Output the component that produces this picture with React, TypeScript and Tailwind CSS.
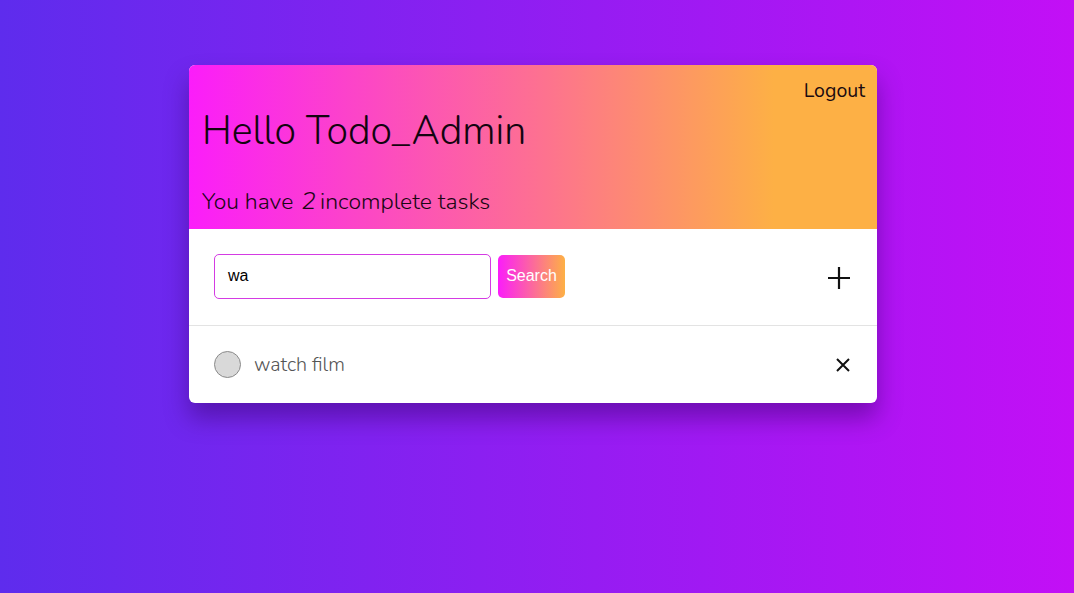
export default function App() {
  return (
    <div className="w-[1074px] h-[593px] bg-[linear-gradient(to_right,#5e2ced,#c30ff6)] flex justify-center pt-[65px] pr-[8px]" style={{ fontFamily: 'Nunito, Lato, "Noto Sans", sans-serif' }}>
      <div className="w-[688px] h-[338px] rounded-[6px] bg-white shadow-[0_15px_25px_rgba(50,0,100,0.45)] overflow-hidden flex flex-col">
        <div className="h-[164px] bg-[linear-gradient(to_right,#fb1dfa,#fd6f93_50%,#fdb045_85%)] relative px-[13px] flex flex-col">
          <div className="absolute right-[12px] top-[13px] text-[19.5px] text-[#1a0a10] leading-[26px]">Logout</div>
          <div className="mt-[42px] text-[39.3px] leading-[48px] text-[#12040f] font-light">Hello Todo_Admin</div>
          <div className="mt-[32px] text-[23px] leading-[28px] text-[#1a0613] font-light">You have <i className="text-[25px] ml-[2px] mr-[4px]">2</i>incomplete tasks</div>
        </div>
        <div className="h-[97px] border-b border-[#e3e3e3] flex items-center px-[25px] pb-[2px]">
          <div className="w-[277px] h-[45px] border border-[#d43be3] rounded-[5px] flex items-center px-[13px] text-[16px] text-black" style={{ fontFamily: '"Liberation Sans", Arial, sans-serif' }}>wa</div>
          <button className="ml-[7px] w-[67px] h-[43px] rounded-[5px] bg-[linear-gradient(to_right,#fb1dfa,#fdb045)] text-white text-[16px]" style={{ fontFamily: '"Liberation Sans", Arial, sans-serif' }}>Search</button>
          <div className="ml-auto mr-[1px] mt-[4px]">
            <svg width="24" height="24" viewBox="0 0 24 24" fill="none" stroke="#111" strokeWidth="2.2">
              <path d="M12 1v22M1 12h22" />
            </svg>
          </div>
        </div>
        <div className="flex-1 flex items-center px-[25px]">
          <div className="w-[27px] h-[27px] rounded-full bg-[#d9d9d9] border border-[#8a8a8a]" />
          <div className="ml-[13px] text-[19.7px] text-[#555] font-light">watch film</div>
          <div className="ml-auto mr-[2px]">
            <svg width="14" height="14" viewBox="0 0 14 14" fill="none" stroke="#111" strokeWidth="2">
              <path d="M1 1l12 12M13 1L1 13" />
            </svg>
          </div>
        </div>
      </div>
    </div>
  );
}
